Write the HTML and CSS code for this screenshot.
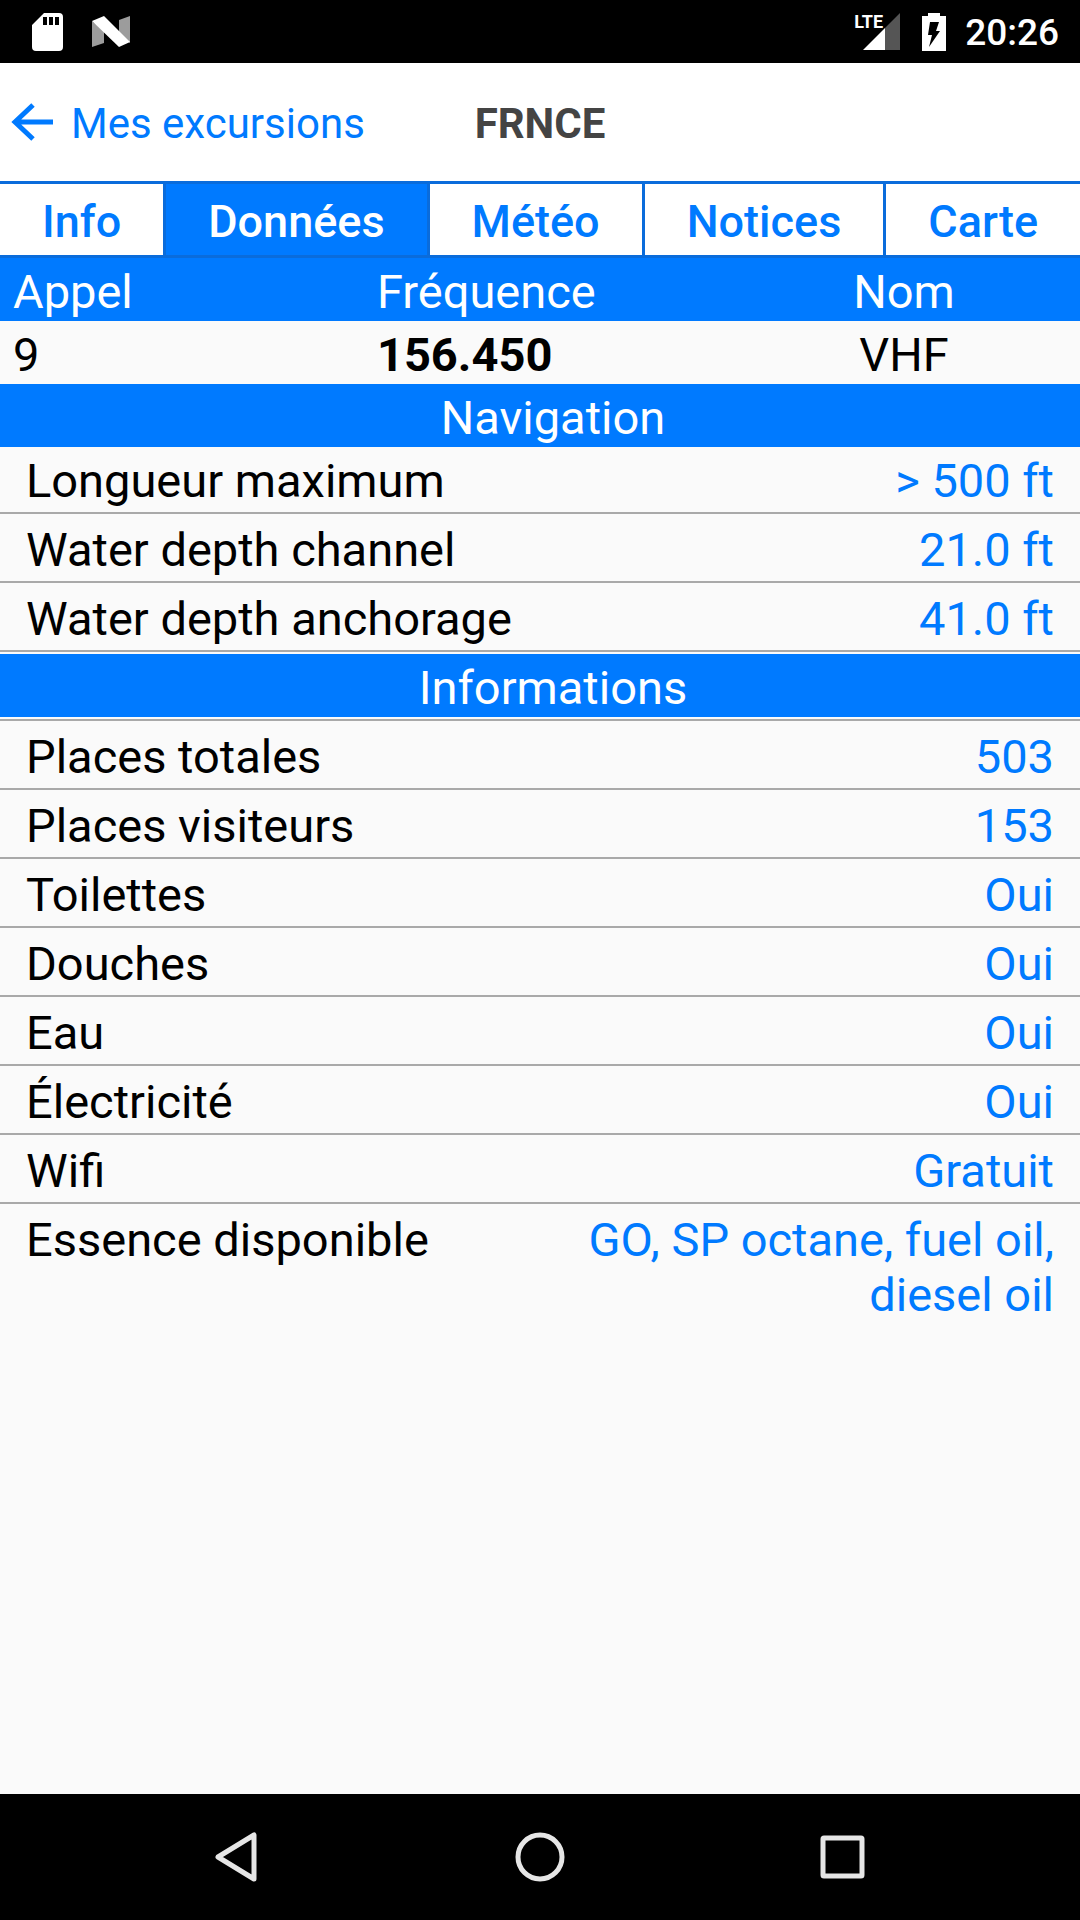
FILE: index.html
```html
<!DOCTYPE html>
<html lang="fr">
<head>
<meta charset="utf-8">
<meta name="viewport" content="width=device-width, initial-scale=1">
<title>FRNCE – Données</title>
<link rel="stylesheet" href="styles.css">
</head>
<body>
<div class="app">
  <div class="status">
    <svg class="status-sd" viewBox="0 0 31 38" aria-hidden="true"><path fill="#fff" fill-rule="evenodd" d="M12 0H27Q31 0 31 4V34Q31 38 27 38H4Q0 38 0 34V12ZM11 4V12H15V4ZM17 4V12H21V4ZM23 4V12H27V4Z"/></svg>
    <svg class="status-n" viewBox="0 0 38 32" aria-hidden="true"><path fill="#9c9c9c" d="M0 5L12 15V27L0 31ZM27 4L38 0V27L27 17Z"/><path fill="#fff" d="M0 5L12 0L38 26L27 31Z"/></svg>
    <div class="status-right">
      <span class="signal">
        <svg class="signal-bars" viewBox="0 0 37 37" aria-hidden="true"><path fill="#555" d="M22 15L37 0V37H22Z"/><path fill="#fff" d="M0 37L22 15V37Z"/></svg>
        <span class="signal-label">LTE</span>
      </span>
      <svg class="battery" viewBox="0 0 24 38" aria-hidden="true"><path fill="#fff" d="M6 0H18V3H24V38H0V3H6Z"/><path d="M8 9H17L14 18H18L7 34L10 22H6Z"/></svg>
      <span class="clock">20:26</span>
    </div>
  </div>

  <header class="header">
    <a class="back" href="#">
      <svg class="back-icon" viewBox="0 0 42 38" aria-hidden="true"><path fill="none" stroke="#007aff" stroke-width="5" d="M22 2L4 19L22 36M3 19H42"/></svg>
      Mes excursions
    </a>
    <h1 class="title">FRNCE</h1>
    <span></span>
  </header>

  <nav class="tabs">
    <a class="tab" href="#">Info</a>
    <a class="tab tab-active" href="#" aria-current="page">Données</a>
    <a class="tab" href="#">Météo</a>
    <a class="tab" href="#">Notices</a>
    <a class="tab" href="#">Carte</a>
  </nav>

  <main class="content">
    <table class="radio">
      <thead>
        <tr><th>Appel</th><th class="col-freq">Fréquence</th><th class="col-name">Nom</th></tr>
      </thead>
      <tbody>
        <tr><td>9</td><td class="freq">156.450</td><td class="col-name">VHF</td></tr>
      </tbody>
    </table>

    <h2 class="section">Navigation</h2>
    <dl class="list">
      <div class="row"><dt>Longueur maximum</dt><dd>&gt; 500 ft</dd></div>
      <div class="row"><dt>Water depth channel</dt><dd>21.0 ft</dd></div>
      <div class="row"><dt>Water depth anchorage</dt><dd>41.0 ft</dd></div>
    </dl>

    <h2 class="section">Informations</h2>
    <dl class="list list-ruled">
      <div class="row"><dt>Places totales</dt><dd>503</dd></div>
      <div class="row"><dt>Places visiteurs</dt><dd>153</dd></div>
      <div class="row"><dt>Toilettes</dt><dd>Oui</dd></div>
      <div class="row"><dt>Douches</dt><dd>Oui</dd></div>
      <div class="row"><dt>Eau</dt><dd>Oui</dd></div>
      <div class="row"><dt>Électricité</dt><dd>Oui</dd></div>
      <div class="row"><dt>Wifi</dt><dd>Gratuit</dd></div>
      <div class="row row-last"><dt>Essence disponible</dt><dd>GO, SP octane, fuel oil, diesel oil</dd></div>
    </dl>
  </main>

  <div class="system-nav">
    <button class="key" type="button" aria-label="Retour"><svg viewBox="0 0 72 72"><path d="M52 14V58L16 36Z"/></svg></button>
    <button class="key" type="button" aria-label="Accueil"><svg viewBox="0 0 72 72"><circle cx="36" cy="36" r="22"/></svg></button>
    <button class="key" type="button" aria-label="Applications récentes"><svg viewBox="0 0 72 72"><rect x="17" y="17" width="39" height="38" rx="1"/></svg></button>
  </div>
</div>
</body>
</html>
```

FILE: styles.css
```css
* {
  box-sizing: border-box;
}

body {
  margin: 0;
  background: #fafafa;
  color: #000;
  font-family: Roboto, "Liberation Sans", sans-serif;
  font-size: 47px;
  line-height: 55px;
}

.app {
  display: flex;
  flex-direction: column;
  min-height: 100vh;
}

/* System status bar */
.status {
  display: flex;
  align-items: center;
  height: 63px;
  padding: 0 21px 0 32px;
  background: #000;
  color: #fff;
}

.status svg {
  display: block;
}

.status-sd {
  width: 31px;
  height: 38px;
}

.status-n {
  width: 38px;
  height: 32px;
  margin-left: 29px;
}

.status-right {
  display: flex;
  align-items: center;
  margin-left: auto;
}

.signal {
  position: relative;
  padding-left: 9px;
}

.signal-bars {
  width: 37px;
  height: 37px;
}

.signal-label {
  position: absolute;
  top: 0;
  left: 0;
  font-size: 18px;
  font-weight: 700;
  line-height: 18px;
}

.battery {
  width: 24px;
  height: 38px;
  margin: 0 19px 0 22px;
}

.clock {
  padding-top: 2px;
  font-size: 37px;
  font-weight: 500;
  line-height: 43px;
}

/* Title bar */
.header {
  display: grid;
  grid-template-columns: 1fr auto 1fr;
  align-items: center;
  height: 118px;
  background: #fff;
  font-size: 42px;
  line-height: 49px;
}

.back {
  display: flex;
  align-items: center;
  gap: 18px;
  padding: 2px 0 0 11px;
  color: #007aff;
  text-decoration: none;
  white-space: nowrap;
}

.back-icon {
  width: 42px;
  height: 38px;
  margin-bottom: 2px;
}

.title {
  margin: 0;
  padding-top: 2px;
  color: #444;
  font-size: 42px;
  font-weight: 700;
}

/* Tabs */
.tabs {
  display: flex;
  gap: 3px;
  padding: 3px 0;
  background: #0a6cdb;
}

.tab {
  flex: 1 1 auto;
  padding: 11px 0 7px;
  background: #fff;
  color: #007aff;
  font-size: 45px;
  font-weight: 500;
  line-height: 53px;
  text-align: center;
  text-decoration: none;
}

.tab-active {
  background: #007aff;
  color: #fff;
}

/* Page content */
.content {
  flex: 1;
}

.radio {
  width: 100%;
  border-collapse: collapse;
  table-layout: fixed;
}

.radio th,
.radio td {
  padding: 6px 0 2px;
  font-weight: 400;
  text-align: left;
}

.radio th {
  background: #007aff;
  color: #fff;
}

.radio th:first-child,
.radio td:first-child {
  padding-left: 13px;
}

.radio .col-freq {
  width: 32.5%;
}

.radio .col-name {
  width: 32.6%;
  text-align: center;
}

.radio .freq {
  font-weight: 700;
}

.section {
  margin: 0;
  padding: 6px 0 2px 26px;
  background: #007aff;
  color: #fff;
  font-size: 47px;
  font-weight: 400;
  text-align: center;
}

.list {
  margin: 0;
}

.list-ruled {
  margin-top: 2px;
  padding-top: 2px;
  border-top: 2px solid #a9a9a9;
}

.row {
  display: flex;
  justify-content: space-between;
  margin-bottom: 2px;
  padding: 6px 26px 4px;
  border-bottom: 2px solid #a9a9a9;
}

.row-last {
  border-bottom: 0;
}

.row dt {
  flex: none;
}

.row dd {
  max-width: 50%;
  margin: 0;
  color: #007aff;
  text-align: right;
}

/* System navigation keys */
.system-nav {
  display: flex;
  justify-content: center;
  height: 126px;
  background: #000;
}

.key {
  display: flex;
  flex: 0 0 28%;
  align-items: center;
  justify-content: center;
  padding: 0;
  border: 0;
  background: none;
}

.key svg {
  width: 72px;
  height: 72px;
  fill: none;
  stroke: #e6e6e6;
  stroke-width: 5;
  stroke-linejoin: round;
}
```
